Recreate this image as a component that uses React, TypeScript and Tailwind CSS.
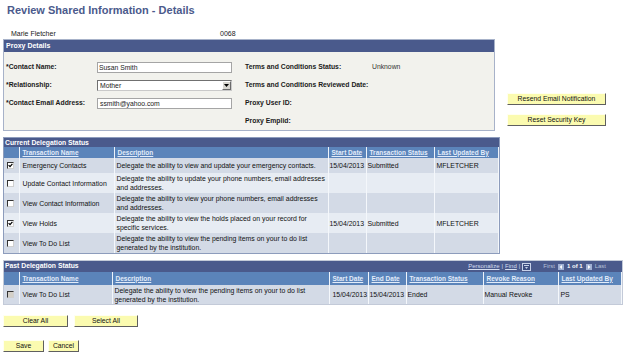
import { ReactNode } from "react";

const font = "font-['Liberation_Sans',Arial,sans-serif]";

function PsButton({ label, className }: { label: string; className: string }) {
  return (
    <button
      className={`h-[12px] bg-[#fbfbb0] border border-t-[#fffff0] border-l-[#fffff0] border-r-[#5f5f5f] border-b-[#5f5f5f] text-[6.8px] leading-[10px] text-[#111] ${className}`}
    >
      {label}
    </button>
  );
}

function CheckBox({ checked, disabled }: { checked?: boolean; disabled?: boolean }) {
  return (
    <span
      className={`flex w-[7px] h-[7px] border border-t-[#333] border-l-[#333] border-r-[#cfcfcf] border-b-[#cfcfcf] ${
        disabled ? "bg-[#d4d0c8]" : "bg-white"
      }`}
    >
      {checked && (
        <svg viewBox="0 0 5 5" className="w-[5px] h-[5px]">
          <path d="M0.6 2.2 L2 3.6 L4.4 0.8" stroke="#000" strokeWidth="1.2" fill="none" />
        </svg>
      )}
    </span>
  );
}

function ColHead({ children }: { children: ReactNode }) {
  return (
    <th className="bg-[#5b84ba] border-r border-[#eef3fa] px-[3px] text-left align-middle font-bold text-[6.5px] text-[#e2ecfa] underline">
      {children}
    </th>
  );
}

type CurrentRow = {
  checked: boolean;
  name: string;
  desc: string;
  start: string;
  status: string;
  by: string;
};

const currentRows: CurrentRow[] = [
  {
    checked: true,
    name: "Emergency Contacts",
    desc: "Delegate the ability to view and update your emergency contacts.",
    start: "15/04/2013",
    status: "Submitted",
    by: "MFLETCHER",
  },
  {
    checked: false,
    name: "Update Contact Information",
    desc: "Delegate the ability to update your phone numbers, email addresses and addresses.",
    start: "",
    status: "",
    by: "",
  },
  {
    checked: false,
    name: "View Contact Information",
    desc: "Delegate the ability to view your phone numbers, email addresses and addresses.",
    start: "",
    status: "",
    by: "",
  },
  {
    checked: true,
    name: "View Holds",
    desc: "Delegate the ability to view the holds placed on your record for specific services.",
    start: "15/04/2013",
    status: "Submitted",
    by: "MFLETCHER",
  },
  {
    checked: false,
    name: "View To Do List",
    desc: "Delegate the ability to view the pending items on your to do list generated by the institution.",
    start: "",
    status: "",
    by: "",
  },
];

function Cell({ children, className = "" }: { children?: ReactNode; className?: string }) {
  return (
    <td className={`border-r border-[#f4f7fb] px-[2px] align-middle text-[6.9px] leading-[9px] text-[#111] ${className}`}>
      {children}
    </td>
  );
}

export default function App() {
  return (
    <div className={`w-[627px] h-[353px] bg-white overflow-hidden ${font} text-black`}>
      <div className="pt-[5px] pl-[7px] h-[16px] text-[11px] leading-[11px] font-bold text-[#4b5a8c]">
        Review Shared Information - Details
      </div>

      <div className="mt-[14px] flex h-[8px] text-[7px] leading-[8px] text-[#222]">
        <span className="pl-[11px] w-[220px]">Marie Fletcher</span>
        <span className="text-[#222]">0068</span>
      </div>

      {/* proxy details */}
      <div className="mt-[1px] ml-[3px] flex items-start">
        <div className="w-[492px] h-[92px] border border-[#a7b2c9] bg-[#f2f2ed]">
          <div className="h-[12px] bg-[#4a5a8c] pl-[2px] text-[7px] leading-[12px] font-bold text-white">
            Proxy Details
          </div>
          <div className="pt-[6px] pl-[2px] text-[6.8px] font-bold text-[#1a1a1a]">
            <div className="flex items-center h-[18px]">
              <span className="w-[91px]">*Contact Name:</span>
              <span className="w-[135px] h-[11px] border border-[#a5a5a5] bg-white pl-[1px] font-normal leading-[9px] text-[#222]">
                Susan Smith
              </span>
              <span className="ml-[13px] w-[127px]">Terms and Conditions Status:</span>
              <span className="font-normal text-[#333]">Unknown</span>
            </div>
            <div className="flex items-center h-[18px]">
              <span className="w-[91px]">*Relationship:</span>
              <span className="flex w-[135px] h-[11px] border border-t-[#707070] border-l-[#707070] border-r-[#c9c9c9] border-b-[#c9c9c9] bg-white">
                <span className="flex-1 pl-[2px] font-normal leading-[9px] text-[#222]">Mother</span>
                <span className="w-[9px] h-[9px] flex items-center justify-center bg-[#d8d6d0] border border-t-white border-l-white border-r-[#6a6a6a] border-b-[#6a6a6a]">
                  <svg viewBox="0 0 5 3" className="w-[5px] h-[3px]">
                    <path d="M0 0 H5 L2.5 3 Z" fill="#000" />
                  </svg>
                </span>
              </span>
              <span className="ml-[13px]">Terms and Conditions Reviewed Date:</span>
            </div>
            <div className="flex items-center h-[18px]">
              <span className="w-[91px]">*Contact Email Address:</span>
              <span className="w-[135px] h-[11px] border border-[#a5a5a5] bg-white pl-[2px] font-normal leading-[9px] text-[#222]">
                ssmith@yahoo.com
              </span>
              <span className="ml-[13px]">Proxy User ID:</span>
            </div>
            <div className="flex items-center h-[18px]">
              <span className="ml-[239px]">Proxy Emplid:</span>
            </div>
          </div>
        </div>
        <div className="ml-[12px] pt-[54px] flex flex-col gap-[9px]">
          <PsButton label="Resend Email Notification" className="w-[99px]" />
          <PsButton label="Reset Security Key" className="w-[99px]" />
        </div>
      </div>

      {/* current delegation */}
      <div className="mt-[6px] ml-[3px] w-[497px] border border-[#8d9cbc]">
        <div className="h-[9px] bg-[#4a5a8c] pl-[1px] text-[6.8px] leading-[9px] font-bold text-white">
          Current Delegation Status
        </div>
        <table className="w-full table-fixed border-collapse">
          <colgroup>
            <col className="w-[15px]" />
            <col className="w-[95px]" />
            <col className="w-[214px]" />
            <col className="w-[38px]" />
            <col className="w-[68px]" />
            <col />
          </colgroup>
          <thead>
            <tr className="h-[11px]">
              <ColHead>{""}</ColHead>
              <ColHead>Transaction Name</ColHead>
              <ColHead>Description</ColHead>
              <ColHead>Start Date</ColHead>
              <ColHead>Transaction Status</ColHead>
              <ColHead>Last Updated By</ColHead>
            </tr>
          </thead>
          <tbody>
            {currentRows.map((r, i) => (
              <tr
                key={r.name}
                className={`${i === 0 ? "h-[15px]" : "h-[20px]"} ${
                  i % 2 === 0 ? "bg-[#d3dae6]" : "bg-[#e7ecf3]"
                }`}
              >
                <Cell className="pl-[3px]">
                  <CheckBox checked={r.checked} />
                </Cell>
                <Cell className="pl-[3px]">{r.name}</Cell>
                <Cell className="pr-0">{r.desc}</Cell>
                <Cell className="pl-[1px] whitespace-nowrap">{r.start}</Cell>
                <Cell className="pl-[1px]">{r.status}</Cell>
                <Cell>{r.by}</Cell>
              </tr>
            ))}
          </tbody>
        </table>
      </div>

      {/* past delegation */}
      <div className="mt-[6px] ml-[3px] w-[620px] border border-[#c3cad8]">
        <div className="flex items-center h-[11px] bg-[#4a5a8c] pl-[1px] text-[6.8px] font-bold text-white">
          <span>Past Delegation Status</span>
          <div className="ml-auto mr-[16px] flex items-center text-[6px] font-normal text-[#d5def0]">
            <span className="underline">Personalize</span>
            <span className="mx-[2px]">|</span>
            <span className="underline">Find</span>
            <span className="mx-[2px]">|</span>
            <svg viewBox="0 0 9 8" className="w-[9px] h-[8px]">
              <rect x="0.5" y="0.5" width="8" height="7" fill="#3c4c80" stroke="#c8d2ea" />
              <rect x="2" y="2" width="5" height="1" fill="#c8d2ea" />
              <path d="M3 4 L6 4 L4.5 6 Z" fill="#c8d2ea" />
            </svg>
            <span className="ml-[12px] text-[#b6c0d8]">First</span>
            <span className="ml-[3px] w-[6px] h-[6px] bg-[#9fb0d4] flex items-center justify-center">
              <svg viewBox="0 0 4 4" className="w-[4px] h-[4px]">
                <path d="M3 0 L0.5 2 L3 4 Z" fill="#fff" />
              </svg>
            </span>
            <span className="mx-[3px] font-bold text-white">1 of 1</span>
            <span className="w-[6px] h-[6px] bg-[#9fb0d4] flex items-center justify-center">
              <svg viewBox="0 0 4 4" className="w-[4px] h-[4px]">
                <path d="M1 0 L3.5 2 L1 4 Z" fill="#fff" />
              </svg>
            </span>
            <span className="ml-[3px] text-[#b6c0d8]">Last</span>
          </div>
        </div>
        <table className="w-full table-fixed border-collapse">
          <colgroup>
            <col className="w-[15px]" />
            <col className="w-[93px]" />
            <col className="w-[217px]" />
            <col className="w-[39px]" />
            <col className="w-[38px]" />
            <col className="w-[77px]" />
            <col className="w-[75px]" />
            <col />
          </colgroup>
          <thead>
            <tr className="h-[13px]">
              <ColHead>{""}</ColHead>
              <ColHead>Transaction Name</ColHead>
              <ColHead>Description</ColHead>
              <ColHead>Start Date</ColHead>
              <ColHead>End Date</ColHead>
              <ColHead>Transaction Status</ColHead>
              <ColHead>Revoke Reason</ColHead>
              <ColHead>Last Updated By</ColHead>
            </tr>
          </thead>
          <tbody>
            <tr className="h-[19px] bg-[#d3dae6]">
              <Cell className="pl-[3px]">
                <CheckBox disabled />
              </Cell>
              <Cell className="pl-[3px]">View To Do List</Cell>
              <Cell>
                Delegate the ability to view the pending items on your to do list generated by the
                institution.
              </Cell>
              <Cell className="pl-[3px] whitespace-nowrap">15/04/2013</Cell>
              <Cell className="pl-[1px] whitespace-nowrap">15/04/2013</Cell>
              <Cell className="pl-[1px]">Ended</Cell>
              <Cell className="pl-[1px]">Manual Revoke</Cell>
              <Cell className="pl-[2px]">PS</Cell>
            </tr>
          </tbody>
        </table>
      </div>

      <div className="mt-[10px] ml-[3px] flex gap-[6px]">
        <PsButton label="Clear All" className="w-[65px]" />
        <PsButton label="Select All" className="w-[64px]" />
      </div>
      <div className="mt-[13px] ml-[3px] flex gap-[4px]">
        <PsButton label="Save" className="w-[41px]" />
        <PsButton label="Cancel" className="w-[31px]" />
      </div>
    </div>
  );
}
